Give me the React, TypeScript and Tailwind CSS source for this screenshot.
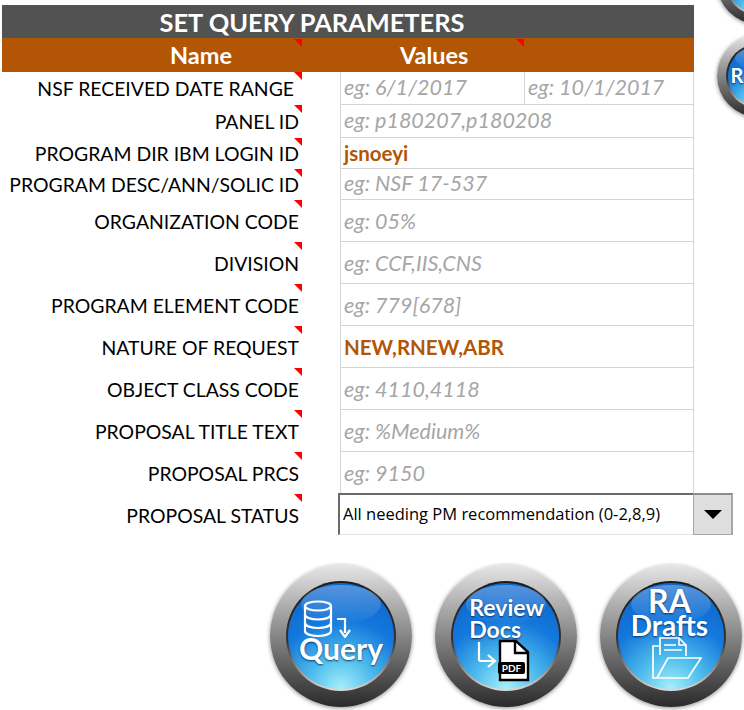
import React from 'react';

type Row = {
    name: string;
    height: string;
    value: string;
    filled?: boolean;
    labelPad?: string;
    second?: string;
    nudge?: string;
};

const rows: Row[] = [
    { name: 'NSF RECEIVED DATE RANGE', height: 'h-[33px]', value: 'eg: 6/1/2017', second: 'eg: 10/1/2017', labelPad: 'pr-[46px]' },
    { name: 'PANEL ID', height: 'h-[33px]', value: 'eg: p180207,p180208' },
    { name: 'PROGRAM DIR IBM LOGIN ID', height: 'h-[31px]', value: 'jsnoeyi', filled: true },
    { name: 'PROGRAM DESC/ANN/SOLIC ID', height: 'h-[31px]', value: 'eg: NSF 17-537' },
    { name: 'ORGANIZATION CODE', height: 'h-[42px]', value: 'eg: 05%', nudge: 'pt-[2px]' },
    { name: 'DIVISION', height: 'h-[42px]', value: 'eg: CCF,IIS,CNS', nudge: 'pt-[2px]' },
    { name: 'PROGRAM ELEMENT CODE', height: 'h-[42px]', value: 'eg: 779[678]', nudge: 'pt-[2px]' },
    { name: 'NATURE OF REQUEST', height: 'h-[42px]', value: 'NEW,RNEW,ABR', filled: true, nudge: 'pt-[2px]' },
    { name: 'OBJECT CLASS CODE', height: 'h-[42px]', value: 'eg: 4110,4118', nudge: 'pt-[2px]' },
    { name: 'PROPOSAL TITLE TEXT', height: 'h-[42px]', value: 'eg: %Medium%', nudge: 'pt-[2px]' },
    { name: 'PROPOSAL PRCS', height: 'h-[42px]', value: 'eg: 9150', nudge: 'pt-[2px]' },
];

const CommentMark = ({ className }: { className: string }) => (
    <span className={`absolute w-0 h-0 border-l-[8px] border-l-transparent border-t-[8px] border-t-[#ff0000] ${className}`} />
);

const Orb = ({ className, children }: { className: string; children?: React.ReactNode }) => (
    <div className={`rounded-full bg-[linear-gradient(180deg,#e6e6e6_0%,#ababab_30%,#6a6a6a_65%,#2a2a2a_100%)] shadow-[0_1px_4px_rgba(0,0,0,0.45)] ${className}`}>
        <div className="relative w-full h-full p-[11.5%]">
            <div className="w-full h-full rounded-full bg-[linear-gradient(180deg,#1c1c1c_0%,#333_55%,#dcdcdc_100%)] p-[1.8%]">
                <div className="relative w-full h-full rounded-full bg-[radial-gradient(circle_at_50%_100%,#a8f0fa_0%,#4dbcec_28%,#1478dc_58%,#0c5fc6_100%)]">
                    <div className="absolute left-[12%] top-[2%] w-[76%] h-[36%] rounded-[50%] bg-[linear-gradient(180deg,rgba(255,255,255,0.3),rgba(255,255,255,0.02))]" />
                    <div className="relative w-full h-full">{children}</div>
                </div>
            </div>
        </div>
    </div>
);

const orbText = 'font-["Lato",sans-serif] font-bold text-white [text-shadow:0_1px_2px_rgba(0,30,80,0.8)]';

const QueryContent = () => (
    <div className="flex flex-col items-center pt-[17px]">
        <svg width="52" height="38" viewBox="0 0 52 38" fill="none" stroke="white" strokeWidth="2.2" className="-ml-[25px]">
            <ellipse cx="15" cy="6" rx="13" ry="4.5" />
            <path d="M2 6v25c0 3 6 5 13 5s13-2 13-5V6" />
            <path d="M2 14.5c0 3 6 5 13 5s13-2 13-5M2 23c0 3 6 5 13 5s13-2 13-5" />
            <path d="M34 19h8v14" />
            <path d="M37 30l5 7 5-7" />
        </svg>
        <span className={`${orbText} text-[30px] leading-[30px] -mt-[5px]`}>Query</span>
    </div>
);

const ReviewContent = () => (
    <div className="flex flex-col pt-[13px] pl-[16px]">
        <span className={`${orbText} text-[23px] leading-[22px]`}>Review</span>
        <span className={`${orbText} text-[23px] leading-[22px]`}>Docs</span>
        <svg width="66" height="44" viewBox="0 0 66 44" fill="none" className="-mt-[1px] ml-[1px]">
            <path d="M9 3v17q0 2 2 2h12M18 16l7 6-7 6" stroke="white" strokeWidth="2.2" />
            <path d="M30 2h16l12 11v28H30z" fill="white" stroke="black" strokeWidth="2.4" />
            <path d="M45 2v12h13" fill="none" stroke="black" strokeWidth="2.4" />
            <rect x="28" y="23" width="27" height="12" rx="2" fill="black" />
            <text x="41.5" y="33" textAnchor="middle" fontSize="10" fontWeight="700" fontFamily="Lato, sans-serif" fill="white">PDF</text>
        </svg>
    </div>
);

const DraftsContent = () => (
    <div className="flex flex-col items-center pt-[6px] pr-[3px]">
        <span className={`${orbText} text-[32px] leading-[24px]`}>RA</span>
        <span className={`${orbText} text-[28px] leading-[24px]`}>Drafts</span>
        <svg width="50" height="42" viewBox="0 0 50 42" fill="none" stroke="white" strokeWidth="1.7" className="ml-[14px]">
            <path d="M8 18V1h19l7 7v11" />
            <path d="M27 1v7h7" />
            <path d="M12 8h12M12 13h18" />
            <path d="M8 9H1v32h35l13-20H16L5 41" />
        </svg>
    </div>
);

export default function App() {
    return (
        <div className='relative w-[744px] h-[710px] overflow-hidden bg-white font-["Lato",sans-serif]'>
            <div className="pt-[5px] pl-[2px]">
                <div className="w-[692px] h-[33px] bg-[#525252] flex items-center justify-center text-white font-bold text-[25.4px] pr-[72px] pt-[1px] whitespace-nowrap">
                    SET QUERY PARAMETERS
                </div>
                <div className="relative w-[692px] h-[34px] bg-[#b25606] text-white font-bold text-[23.5px]">
                    <div className="flex h-full items-center pt-[2px]">
                        <span className="w-[398px] text-center">Name</span>
                        <span className="w-[68px] text-center whitespace-nowrap">Values</span>
                    </div>
                    <CommentMark className="left-[292px] top-[1px]" />
                    <CommentMark className="left-[514px] top-[1px]" />
                </div>

                {rows.map((row) => (
                    <div key={row.name} className={`flex w-[692px] ${row.height}`}>
                        <div className={`relative w-[338px] flex items-center justify-end text-black text-[19.4px] whitespace-nowrap ${row.labelPad ?? 'pr-[41px]'} ${row.nudge ?? ''}`}>
                            {row.name}
                            <CommentMark className="left-[292px] top-0" />
                        </div>
                        <div className={`flex flex-1 border-l border-r border-b border-[#d4d4d4] leading-none ${row.nudge ?? ''}`}>
                            <div className={`flex items-center pl-[3px] whitespace-nowrap ${row.second ? 'w-[184px] border-r border-[#d4d4d4]' : 'flex-1'} ${row.filled ? 'text-[#b25606] font-bold text-[20.5px]' : 'text-[#a6a6a6] italic text-[21.5px]'}`}>
                                {row.value}
                            </div>
                            {row.second && (
                                <div className="flex-1 flex items-center pl-[3px] text-[#a6a6a6] italic text-[21.5px] whitespace-nowrap">{row.second}</div>
                            )}
                        </div>
                    </div>
                ))}

                <div className="flex w-[731px] h-[42px] -mt-[1px]">
                    <div className="relative w-[336px] flex items-center justify-end text-black text-[19.4px] pr-[39px] pt-[3px] whitespace-nowrap">
                        PROPOSAL STATUS
                        <CommentMark className="left-[292px] top-[1px]" />
                    </div>
                    <div className="flex w-[395px]">
                        <div className='flex-1 flex items-center pl-[3px] border-t-2 border-l-2 border-[#696969] border-b border-b-[#e4e4e4] font-["Open_Sans",sans-serif] text-[16.5px] text-black whitespace-nowrap'>
                            All needing PM recommendation (0-2,8,9)
                        </div>
                        <div className="w-[40px] flex items-center justify-center bg-[#dedede] border border-[#a6a6a6] border-t-2 border-t-[#8c8c8c] border-r-2">
                            <span className="w-0 h-0 border-l-[9px] border-r-[9px] border-t-[9px] border-l-transparent border-r-transparent border-t-black" />
                        </div>
                    </div>
                </div>
            </div>

            <div className="flex gap-[23px] pl-[270px] pt-[30px]">
                <Orb className="w-[142px] h-[142px] shrink-0"><QueryContent /></Orb>
                <Orb className="w-[142px] h-[142px] shrink-0"><ReviewContent /></Orb>
                <Orb className="w-[142px] h-[142px] shrink-0"><DraftsContent /></Orb>
            </div>

            <Orb className="absolute left-[717px] -top-[58px] w-[82px] h-[82px]" />
            <Orb className="absolute left-[717px] top-[35px] w-[82px] h-[82px]">
                <span className={`${orbText} absolute left-[3px] top-[19px] text-[20px] leading-none`}>R</span>
            </Orb>
        </div>
    );
}
